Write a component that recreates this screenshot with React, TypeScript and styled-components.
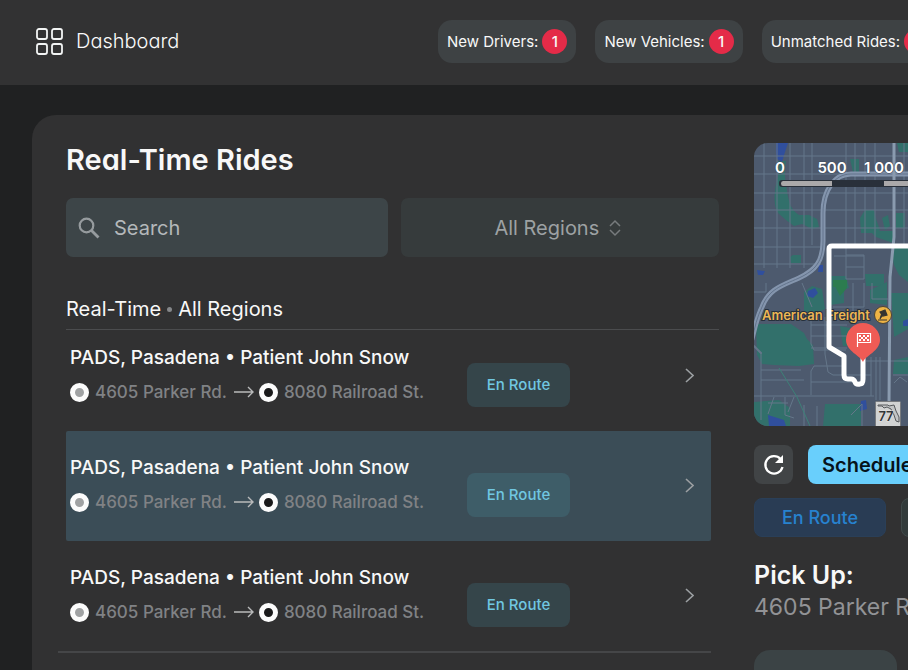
import React from "react";
import styled, { createGlobalStyle } from "styled-components";

const GlobalStyle = createGlobalStyle`
  *, *::before, *::after { box-sizing: border-box; }
  body {
    margin: 0;
    background: #202122;
    color: #f8f8f8;
    font-family: Inter, "Liberation Sans", sans-serif;
    -webkit-font-smoothing: antialiased;
  }
  button, input, select { font: inherit; color: inherit; }
  button { border: 0; cursor: pointer; }
  h1, h2, h3, p, ul { margin: 0; padding: 0; }
`;

const Page = styled.div`
  display: flex;
  flex-direction: column;
  height: 100vh;
  overflow: hidden;
`;

const Header = styled.header`
  display: flex;
  flex: none;
  align-items: center;
  height: 85px;
  padding: 0 0 3px 36px;
  background: #323233;
  overflow: hidden;
`;

const Brand = styled.a`
  display: flex;
  flex: 0 0 402px;
  align-items: center;
  gap: 13px;
  color: #fafafa;
  font-size: 20px;
  font-weight: 300;
  font-feature-settings: "cv11";
  line-height: 26px;
  text-decoration: none;
`;

const Counters = styled.nav`
  display: flex;
  gap: 19px;
`;

const Counter = styled.button`
  display: flex;
  flex: none;
  align-items: center;
  gap: 4px;
  height: 43px;
  padding: 0 9px;
  border-radius: 14px;
  background: #3e4244;
  font-size: 15px;
  font-weight: 400;
  white-space: nowrap;
`;

const Count = styled.span`
  width: 25px;
  height: 25px;
  border-radius: 50%;
  background: #e42b48;
  font-size: 15px;
  font-weight: 500;
  line-height: 25px;
  text-align: center;
`;

const Panel = styled.main`
  display: grid;
  flex: 1;
  grid-template-columns: minmax(0, 1fr) 154px;
  gap: 35px;
  min-height: 0;
  margin: 30px 0 0 32px;
  padding: 28px 0 0 34px;
  border-radius: 24px 0 0 0;
  background: #313132;
  overflow: hidden;
`;

const Rides = styled.section`
  min-width: 0;
`;

const Title = styled.h1`
  font-size: 29px;
  font-weight: 600;
  font-feature-settings: "cv11";
  line-height: 34px;
`;

const Filters = styled.div`
  display: flex;
  gap: 13px;
  margin-top: 21px;
`;

const Field = styled.label<{ $select?: boolean }>`
  display: flex;
  flex: ${(p) => (p.$select ? 318 : 322)} 1 0;
  align-items: center;
  justify-content: ${(p) => (p.$select ? "center" : "flex-start")};
  gap: ${(p) => (p.$select ? 10 : 14)}px;
  min-width: 0;
  height: 59px;
  padding: ${(p) => (p.$select ? "0 14px 0 10px" : "0 12px")};
  border-radius: 7px;
  background: ${(p) => (p.$select ? "#363b3c" : "#3d4548")};
  color: #9da1a3;
  font-size: 20px;
`;

const SearchInput = styled.input`
  flex: 1;
  min-width: 0;
  padding: 0;
  border: 0;
  outline: 0;
  background: transparent;
  &::placeholder { color: #b4b8ba; opacity: 1; }
`;

const RegionSelect = styled.select`
  padding: 0;
  border: 0;
  outline: 0;
  appearance: none;
  background: transparent;
`;

const ListHeading = styled.h2`
  display: flex;
  align-items: center;
  gap: 6px;
  margin-top: 39px;
  padding-bottom: 7px;
  border-bottom: 1px solid #4b4c4e;
  font-size: 20px;
  font-weight: 400;
  line-height: 26px;
`;

const Dot = styled.span`
  width: 5px;
  height: 5px;
  border-radius: 50%;
  background: #85878a;
`;

const RideList = styled.ul`
  margin-right: 8px;
  list-style: none;
`;

const Ride = styled.li<{ $selected: boolean }>`
  display: grid;
  grid-template-columns: minmax(0, 397px) 103px minmax(30px, 1fr);
  grid-template-rows: 62px;
  padding: 24px 8px 24px 4px;
  border-radius: 2px;
  background: ${(p) => (p.$selected ? "#3b4d57" : "transparent")};
  white-space: nowrap;
  &:first-child { padding-top: 15px; }
`;

const RideTitle = styled.h3`
  font-size: 19px;
  font-weight: 500;
  line-height: 26px;
`;

const Stops = styled.p`
  display: flex;
  align-items: center;
  margin-top: 11px;
  color: #808285;
  font-size: 17px;
  font-weight: 500;
  line-height: 20px;
`;

const StopDot = styled.span<{ $end?: boolean }>`
  width: 19px;
  height: 19px;
  margin-right: 6px;
  border: 5px solid #fcfcfc;
  border-radius: 50%;
  background: ${(p) => (p.$end ? "#1a1a1b" : "#a0a2a3")};
`;

const ArrowIcon = styled.svg`
  margin: 0 5px 0 7px;
`;

const Status = styled.span<{ $selected: boolean }>`
  align-self: end;
  height: 44px;
  border-radius: 8px;
  background: ${(p) => (p.$selected ? "#3e5d68" : "#35454a")};
  color: #70c7e1;
  font-size: 15px;
  font-weight: 500;
  line-height: 44px;
  text-align: center;
`;

const OpenButton = styled.button`
  display: flex;
  align-items: center;
  justify-self: end;
  justify-content: center;
  width: 28px;
  height: 60px;
  padding: 0;
  background: transparent;
  color: #9b9fa2;
`;

const ListEnd = styled.hr`
  height: 2px;
  margin: 0 8px 0 -8px;
  border: 0;
  background: #454648;
`;

const Details = styled.aside`
  min-width: 0;
  white-space: nowrap;
`;

const Map = styled.svg`
  display: block;
  width: 100%;
  height: 283px;
  border-radius: 14px 0 0 14px;
  background: #4d5a6e;
`;

const MapText = styled.text<{ $size: number }>`
  font-size: ${(p) => p.$size}px;
  font-weight: 600;
  paint-order: stroke;
`;

const Actions = styled.div<{ $top: number }>`
  display: flex;
  gap: 15px;
  margin-top: ${(p) => p.$top}px;
`;

const RefreshButton = styled.button`
  display: flex;
  flex: none;
  align-items: center;
  justify-content: center;
  width: 39px;
  height: 39px;
  padding: 0;
  border-radius: 8px;
  background: #414446;
`;

const ScheduleButton = styled.button`
  flex: none;
  height: 39px;
  padding: 0 14px;
  border-radius: 8px;
  background: #69cffc;
  color: #06131b;
  font-size: 20px;
  font-weight: 600;
`;

const Segment = styled.button<{ $active?: boolean }>`
  flex: none;
  width: 132px;
  height: 39px;
  border: 1px solid ${(p) => (p.$active ? "#2a3f58" : "#414a4a")};
  border-radius: 8px;
  background: ${(p) => (p.$active ? "#293c54" : "#333b3b")};
  color: #2782cf;
  font-size: 18px;
  font-weight: 500;
`;

const PickUpTitle = styled.h2`
  margin-top: 22px;
  font-size: 25px;
  font-weight: 600;
  line-height: 32px;
`;

const PickUpAddress = styled.p`
  color: #929396;
  font-size: 23px;
  line-height: 32px;
`;

const DetailButton = styled.button`
  width: 143px;
  height: 48px;
  margin-top: 27px;
  border-radius: 16px;
  background: #3b4345;
`;

const counters = ["New Drivers:", "New Vehicles:", "Unmatched Rides:"];
const rides = [
  { id: 1, selected: false },
  { id: 2, selected: true },
  { id: 3, selected: false },
];

const streetsX = [10, 23, 36, 50, 58, 92, 101, 111, 121, 150];
const streetsY = [13, 31, 50, 67, 85, 104, 121];

function RouteMap() {
  return (
    <Map viewBox="0 0 154 283" preserveAspectRatio="xMinYMin slice" role="img" aria-label="Route map">
      <g fill="#32706b">
        <path d="M24 18h8c-2 10-1 20 1 30 2 12 4 19 12 24h10l8 4 2 8-7 2-10-5-8 2-8-6-8-7C18 61 21 43 24 34z" />
        <path d="M36 114l3-2h8v8H37z" />
        <path d="M106 75l5-8h9l2 9 4 11-3 3h-16zM96 16h9v13h-6zM143 0h11v9h-9z" />
        <path d="M128 75l6-3 2 11-5 4zM142 70h9v15h-9zM116 88h23v12l-17-6z" />
        <path d="M137 105h17v34l-9-7-5-10zM77 133h15l3 12-12 3-6-5zM111 131h19v12h-18z" />
        <path d="M50 149l8-6 10 3 3 20-10 5-11-3z" />
        <path d="M2 181h35l13 9 3 6 6 6 1 19-15 2-25-1-12-1-5-9z" />
        <path d="M76 142h14v18l-14 2zM86 183l10 2 5 18H89zM116 147l17-8v23l-17-2zM137 150h17v36l-14 8zM140 217l14-3v17h-15z" />
        <path d="M0 259l25-2 11 8v18H0zM71 261h36v22H69z" />
      </g>
      <path d="M80 141l9-3 4 7-7 8zM79 137h14v7H79z" fill="#2c7c4f" />
      <path d="M22 0h12l-3 9-3 10-5-3-1-7zM54 148l7-3 3 5-5 5-6-2zM14 272l16 5 2 6H15zM3 127l8 1-2 4H4zM65 122h4v7h-5zM107 258l5-1 1 9-7 2zM149 178l5-2v7h-5z" fill="#304f9d" />
      <g fill="none" stroke="#65778a" strokeWidth="1">
        {streetsX.map((x) => (
          <path key={x} d={`M${x} 0V${x < 55 ? 125 : 102}`} />
        ))}
        {streetsY.map((y) => (
          <path key={y} d={`M0 ${y}H${y > 100 ? 67 : 154}`} />
        ))}
        <path d="M92 102v34h18v-24H92M80 113h30M92 124h18M99 140v35M79 164h31v-24M118 140v16h16" />
        <path d="M57 182h36M57 193h36M57 205h36M57 176v25l3 6h32M71 174v37l3 18 5 3h38M0 149h12v-9M48 140l10 24" />
        <path d="M7 210v67M7 227h40M7 237h43M57 252v-24l3-5h32M57 239h52M0 253h120M122 214v43M126 214v43M117 253v-39M112 218h42M139 232h15M140 240l6-6 7 5" />
        <path d="M20 254l-6 17M31 254v18l9 3M40 254l-6 15M50 262v21M63 263v20M97 272l11-11v22M14 260h20" />
        <path d="M25 225l18 29 13 29" stroke="#3d8178" />
      </g>
      <g fill="none" strokeLinecap="round" strokeLinejoin="round">
        <path d="M154 31H97c-17 0-28 17-28 39v28c0 20-7 29-24 37-18 8-30 11-37 29-5 10-7 20-10 32" stroke="#8495ad" strokeWidth="5" />
        <path d="M154 31H97c-17 0-28 17-28 39v28c0 20-7 29-24 37-18 8-30 11-37 29-5 10-7 20-10 32" stroke="#62738b" strokeWidth="1" />
        <path d="M140 0v94l-4 40-1 126" stroke="#8a9baf" strokeWidth="3" />
        <path d="M0 203l7 7" stroke="#65778a" strokeWidth="2" />
      </g>
      <MapText $size={13} x="8" y="177" fill="#edb654" stroke="#26303c" strokeWidth="2">American Freight</MapText>
      <circle cx="129" cy="172" r="8.5" fill="#eeb445" stroke="#4b4434" />
      <path d="M124 177h9M126 176l2-6 3 1M126 169l5-2 2 5-4 1z" fill="#363530" stroke="#363530" strokeWidth="1.2" />
      <path d="M156 103H78q-3 0-3 3v98l15 9v19q0 4 4 4h3q3 0 4 3 1 3 5 2 3 0 3-5v-22" fill="none" stroke="#fff" strokeWidth="5" strokeLinejoin="round" />
      <path d="M109 219c-2-6-17-11-17-22a17 17 0 0 1 34 0c0 11-15 16-17 22z" fill="#ef5b55" />
      <path d="M103.500 190v14M103.500 190.500h13v9h-13" fill="none" stroke="#fff" strokeWidth="1.200" />
      <path d="M116.500 190v10" stroke="#fff" />
      <path d="M105 192h2v2h-2zm4 0h2v2h-2zm4 0h2v2h-2zm-6 2h2v2h-2zm4 0h2v2h-2zm-6 2h2v2h-2zm4 0h2v2h-2zm4 0h2v2h-2z" fill="#fff" />
      <rect x="25" y="37" width="150" height="7" rx="3" fill="#29303a" />
      <path d="M78 38H29q-2 0-2 2.500t2 2.500h49zM130 38h24v5h-24z" fill="#aba9aa" />
      <g fill="#fff" stroke="#414d5d" strokeWidth="1" textAnchor="middle">
        <MapText $size={15} x="26" y="30">0</MapText>
        <MapText $size={15} x="78" y="30">500</MapText>
        <MapText $size={15} x="130" y="30">1 000</MapText>
      </g>
      <rect x="121.500" y="258.500" width="25" height="27" rx="1" fill="#d2d3d3" stroke="#777a7e" />
      <path d="M124 262h10l1 1 5-1 2 6 3 6v5l-3-1-2-6-3-6-4-2-3 1-2-2h-4z" fill="#c2c4c5" stroke="#56595c" />
      <MapText $size={13} x="132" y="278" fill="#333638" stroke="#e2e3e3" strokeWidth="1" textAnchor="middle">77</MapText>
    </Map>
  );
}

export default function App() {
  return (
    <Page>
      <GlobalStyle />
      <Header>
        <Brand href="#">
          <svg width="27" height="27" viewBox="0 0 27 27" fill="none" stroke="#f2f4f4" strokeWidth="1.800" aria-hidden="true">
            <rect x="1" y="1" width="10" height="10" rx="2" />
            <rect x="16" y="1" width="10" height="10" rx="2" />
            <rect x="1" y="16" width="10" height="10" rx="2" />
            <rect x="16" y="16" width="10" height="10" rx="2" />
          </svg>
          Dashboard
        </Brand>
        <Counters>
          {counters.map((label) => (
            <Counter key={label}>
              {label}
              <Count>1</Count>
            </Counter>
          ))}
        </Counters>
      </Header>
      <Panel>
        <Rides>
          <Title>Real-Time Rides</Title>
          <Filters>
            <Field>
              <svg width="22" height="22" viewBox="0 0 22 22" fill="none" stroke="#969b9e" strokeWidth="2.200" aria-hidden="true">
                <circle cx="8.500" cy="8.500" r="6.800" />
                <path d="M13.500 13.500l7 7" strokeWidth="2.800" />
              </svg>
              <SearchInput type="search" placeholder="Search" aria-label="Search" />
            </Field>
            <Field $select>
              <RegionSelect aria-label="Region">
                <option>All Regions</option>
              </RegionSelect>
              <svg width="12" height="18" viewBox="0 0 12 18" fill="none" stroke="#777b7d" strokeWidth="1.500" aria-hidden="true">
                <path d="M1 7l5-5 5 5M1 11l5 5 5-5" />
              </svg>
            </Field>
          </Filters>
          <ListHeading>
            <span>Real-Time</span>
            <Dot />
            <span>All Regions</span>
          </ListHeading>
          <RideList>
            {rides.map((ride) => (
              <Ride key={ride.id} $selected={ride.selected}>
                <div>
                  <RideTitle>PADS, Pasadena • Patient John Snow</RideTitle>
                  <Stops>
                    <StopDot />
                    4605 Parker Rd.
                    <ArrowIcon width="20" height="12" viewBox="0 0 20 12" fill="none" stroke="#b9babb" strokeWidth="1.400" aria-hidden="true">
                      <path d="M0 6h19M14 1l5 5-5 5" />
                    </ArrowIcon>
                    <StopDot $end />
                    8080 Railroad St.
                  </Stops>
                </div>
                <Status $selected={ride.selected}>En Route</Status>
                <OpenButton aria-label="Open ride">
                  <svg width="9" height="15" viewBox="0 0 9 15" fill="none" stroke="currentColor" strokeWidth="1.600" aria-hidden="true">
                    <path d="M1 1l7 6.500L1 14" />
                  </svg>
                </OpenButton>
              </Ride>
            ))}
          </RideList>
          <ListEnd />
        </Rides>
        <Details>
          <RouteMap />
          <Actions $top={19}>
            <RefreshButton aria-label="Refresh">
              <svg width="22" height="22" viewBox="0 0 22 22" fill="none" stroke="#fff" strokeWidth="2.300" aria-hidden="true">
                <path d="M17.500 5A8.700 8.700 0 1 0 19.500 13" />
                <path d="M20 1v8h-8z" fill="#fff" stroke="none" />
              </svg>
            </RefreshButton>
            <ScheduleButton>Schedule</ScheduleButton>
          </Actions>
          <Actions $top={14}>
            <Segment $active>En Route</Segment>
            <Segment aria-label="Next status" />
          </Actions>
          <PickUpTitle>Pick Up:</PickUpTitle>
          <PickUpAddress>4605 Parker Rd.</PickUpAddress>
          <DetailButton aria-label="Ride details" />
        </Details>
      </Panel>
    </Page>
  );
}
